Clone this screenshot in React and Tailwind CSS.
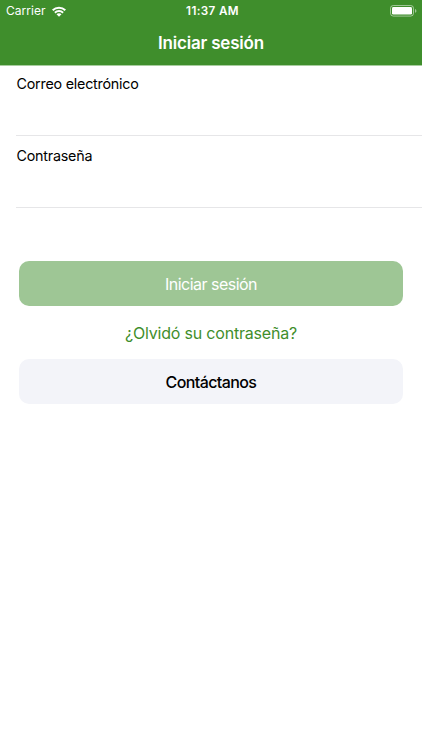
function WifiIcon() {
  return (
    <svg width="14" height="11" viewBox="0 0 14 11" fill="none" stroke="white" strokeWidth="2">
      <path d="M0.7 4.3C4.2 0.8 9.800 0.8 13.300 4.300" />
      <path d="M2.9 6.700C5.200 4.500 8.800 4.500 11.100 6.700" />
      <path d="M4.500 8.200C5.900 6.900 8.100 6.900 9.500 8.200L7 10.800Z" fill="white" stroke="none" />
    </svg>
  );
}

function BatteryIcon() {
  return (
    <svg width="27" height="12" viewBox="0 0 27 12" fill="none">
      <rect x="0.5" y="0.5" width="23" height="10.6" rx="2.8" stroke="white" strokeOpacity="0.5" />
      <rect x="2" y="2" width="20" height="7.6" rx="1.4" fill="white" />
      <path d="M25 4v3.8c.8-.3 1.4-1 1.4-1.9S25.8 4.3 25 4Z" fill="white" fillOpacity="0.5" />
    </svg>
  );
}

function Field({ label, type }) {
  return (
    <label className="ml-4 block h-[72px] border-b border-[#e6e6e8] pt-[10px] pl-[0.5px]">
      <span className="block text-[14.3px] leading-5 tracking-[-0.22px] text-black">{label}</span>
      <input type={type} className="block h-9 w-full bg-transparent text-sm outline-none" />
    </label>
  );
}

export default function App() {
  return (
    <main className="h-[750px] w-full overflow-hidden bg-white font-['Inter',sans-serif]">
      <header className="h-[65px] bg-[#3f8e2c] text-white">
        <div className="grid h-[22px] grid-cols-3 items-center pr-[5px] pl-[6px]">
          <div className="flex items-center gap-[6px]">
            <span className="text-[12px] leading-4 tracking-[0.05px]">Carrier</span>
            <WifiIcon />
          </div>
          <span className="pl-[2px] text-center text-[11.7px] leading-4 font-semibold tracking-[0.35px]">11:37 AM</span>
          <div className="flex justify-end">
            <BatteryIcon />
          </div>
        </div>
        <h1 className="pt-[9px] text-center text-[17px] leading-6 font-semibold tracking-[-0.2px]">Iniciar sesión</h1>
      </header>
      <div className="h-px bg-[#a8cd9f]" />
      <form className="-mt-[2px]">
        <Field label="Correo electrónico" type="email" />
        <Field label="Contraseña" type="password" />
        <div className="mt-[53px] flex flex-col px-[19px]">
          <button type="button" className="h-[45px] rounded-[10px] bg-[#9ec695] text-[16px] tracking-[-0.52px] text-white">Iniciar sesión</button>
          <a className="mt-[15px] h-[38px] text-center text-[16px] leading-6 tracking-[-0.2px] text-[#3f8e2c]">¿Olvidó su contraseña?</a>
          <button type="button" className="h-[45px] rounded-[10px] bg-[#f3f4f9] text-[16px] font-medium tracking-[-0.6px] text-black">Contáctanos</button>
        </div>
      </form>
    </main>
  );
}
